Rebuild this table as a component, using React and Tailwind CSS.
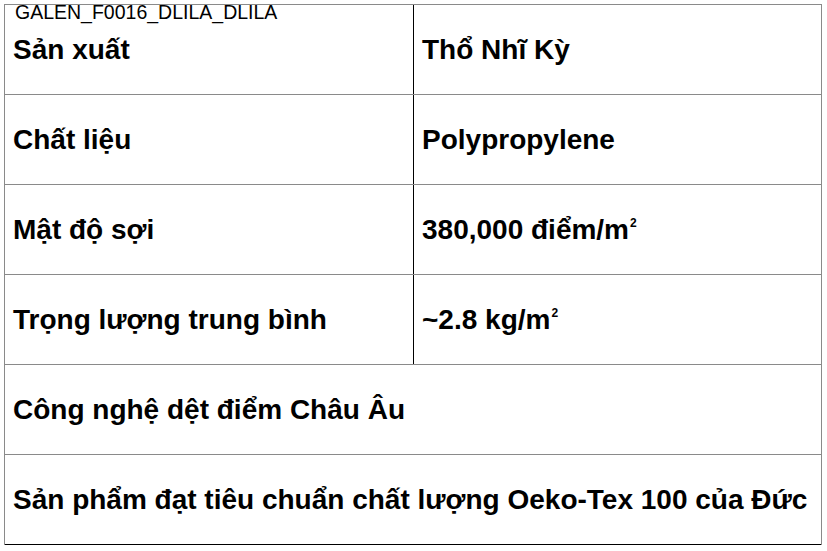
import React from "react";

const rows = [
  ["Sản xuất", "Thổ Nhĩ Kỳ"],
  ["Chất liệu", "Polypropylene"],
  ["Mật độ sợi", "380,000 điểm/m", true],
  ["Trọng lượng trung bình", "~2.8 kg/m", true],
  ["Công nghệ dệt điểm Châu Âu"],
  ["Sản phẩm đạt tiêu chuẩn chất lượng Oeko-Tex 100 của Đức"],
];

const App = () => {
  return (
    <div className="relative h-[551px] w-[827px] bg-white font-['Liberation_Sans',Arial,sans-serif] text-black">
      <div className="absolute left-[15px] top-[2px] text-[19.5px] leading-[20px]">
        GALEN_F0016_DLILA_DLILA
      </div>

      <div className="ml-[4px] w-[818px] pt-[4px]">
        <div className="border-x-[1.5px] border-t-[1.5px] border-[#8a8a8a]">
          {rows.map((row, i) => {
            const last = i === rows.length - 1;
            return (
              <div
                key={i}
                className={
                  "flex h-[90px] items-center border-b-[1.5px] " +
                  (last ? "border-black" : "border-[#8a8a8a]")
                }
              >
                {row.length > 1 ? (
                  <>
                    <div className="flex h-full w-[409px] items-center border-r border-black pl-[8px] text-[28px] font-bold">
                      {row[0]}
                    </div>
                    <div className="flex h-full flex-1 items-center pl-[8px] text-[28px] font-bold">
                      <span className="leading-[32px]">
                        {row[1]}
                        {row[2] && (
                          <span className="relative -top-[12px] ml-[1px] text-[12px] leading-none">2</span>
                        )}
                      </span>
                    </div>
                  </>
                ) : (
                  <div className="pl-[8px] text-[28px] font-bold">{row[0]}</div>
                )}
              </div>
            );
          })}
        </div>
      </div>
    </div>
  );
};

export default App;
